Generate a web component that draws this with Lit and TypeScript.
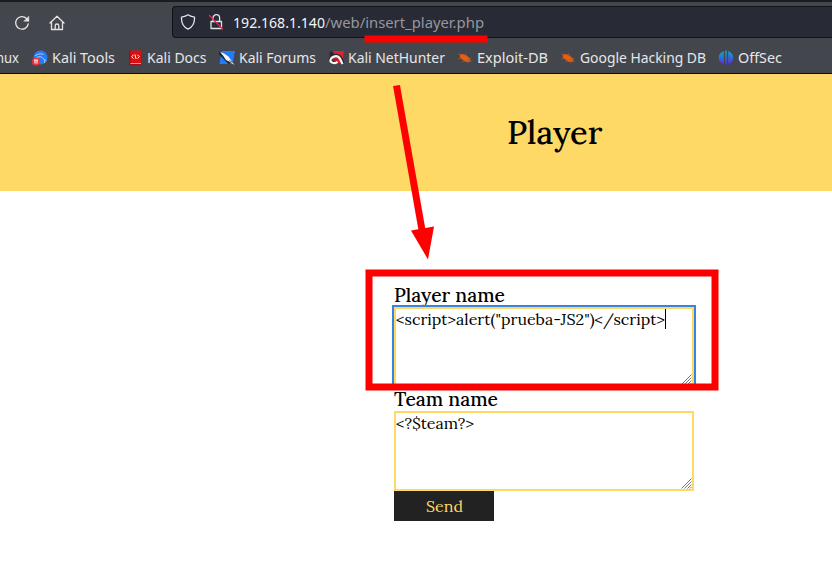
import { LitElement, html, css, svg } from "lit";
import { customElement } from "lit/decorators.js";

const bug = svg`<svg class="ico" viewBox="0 0 16 16"><path d="M2.500 4.500 5 4l3 .8 3 2 2 1.700.5 2.500-2 1.200-3-.4-3-2-2.500-2.300z" fill="#e95d0f"/><path d="M1 3.500l4 2M.8 8.500l5 .5M5 12.500l3-2M8 2.500l2 4M14.500 8l-4 1M15 11.500l-4-1M11 13.500l-1-3" stroke="#a3562c" stroke-width=".7" fill="none"/></svg>`;

const icons: Record<string, unknown> = {
  tools: svg`<svg class="ico" viewBox="0 0 16 16"><circle cx="8.500" cy="7.500" r="7" fill="#2879ef"/><path d="M3 6c3-2.500 6-2.500 8.500-1.500M4 8c3-2 6-1.500 7 .5 1 1.500 2.500 1 3.500 2.500M12 10c1 1 1 2 .5 3" stroke="#b4d2ff" stroke-width="1" fill="none"/><circle cx="4" cy="11.500" r="4" fill="#ee3038"/><path d="M2 10h4M3 10v3.600M5 10v3.600" stroke="#fff" stroke-width="1"/></svg>`,
  docs: svg`<svg class="ico" viewBox="0 0 16 16"><path d="M2 1 3.500.5H14V13H2z" fill="#dc1010"/><path d="M2 1v13.500h1.500V.5z" fill="#a10d18"/><path d="M3.500 13H14v.8H3.500z" fill="#c9c9c9"/><path d="M2 14h12v1.300H2z" fill="#a10d18"/><path d="M6.500 4.800 4.700 6.700l1.800 1.900M10.500 4.800 12.300 6.700l-1.800 1.900M7.900 4.500 9.100 9" stroke="#fff" stroke-width="1" fill="none"/></svg>`,
  forums: svg`<svg class="ico" viewBox="0 0 16 16"><path d="M2.500 1H16l-2.500 13H.5z" fill="#217df5"/><path d="M0 2.500 11 13.500" stroke="#24262d" stroke-width="3"/><path d="M1 2 5 3.500 9.500 6.500 12 10l3.500 5-4.500-3L7 10 4 5.500z" fill="#f5f5f5"/><path d="M10.500 10.500l3 2" stroke="#24262d" stroke-width=".8"/></svg>`,
  hunter: svg`<svg class="ico" viewBox="0 0 16 16"><path d="M3.500 1H16l-2 12H8z" fill="#e3212b"/><path d="M1.500 2.500 4.500 1l1.500 3-4 7z" fill="#292a2f"/><path d="M6 13C.5 12 1.500 5.500 8 5.500c4 0 5 3.500 7 8" stroke="#25262c" stroke-width="3.400" fill="none"/><path d="M9.500 11.800C6 14.500 1.800 12.500 2.500 9.800 3.200 6.800 8 5.200 10.500 7c2 1.500 2.500 4 4 7" stroke="#f6f6f6" stroke-width="2.200" fill="none"/><path d="M5.500 9.700 8.500 8.200l1.500 1.500-3 2z" fill="#bd1925"/></svg>`,
  bug,
  offsec: svg`<svg class="ico" viewBox="0 0 16 16"><defs><linearGradient id="g" gradientUnits="userSpaceOnUse" x1="0" y1="1" x2="0" y2="15"><stop stop-color="#0dabc2"/><stop offset=".5" stop-color="#316bd5"/><stop offset="1" stop-color="#6520df"/></linearGradient></defs><path d="M5.800 1v13.300C-1 12-1 3.300 5.800 1zM7.200.6h1.600v15H7.200zM10.200 1c6.800 2.300 6.800 11 0 13.300z" fill="url(#g)"/></svg>`,
};

const bookmarks = [
  { icon: "tools", text: "Kali Tools", x: 32, w: 63 },
  { icon: "docs", text: "Kali Docs", x: 127, w: 59.5 },
  { icon: "forums", text: "Kali Forums", x: 219, w: 77 },
  { icon: "hunter", text: "Kali NetHunter", x: 328, w: 97 },
  { icon: "bug", text: "Exploit-DB", x: 457, w: 71 },
  { icon: "bug", text: "Google Hacking DB", x: 560, w: 126 },
  { icon: "offsec", text: "OffSec", x: 718, w: 44 },
];

// Text run fitted to a fixed advance width; the baseline lies one font size below the top.
const fit = (text: string, width: number, size: number, kind = "") =>
  html`<svg class="fit ${kind}" width=${width} height=${size * 1.3} font-size=${size}>
    <text x="0" y=${size} textLength=${width} lengthAdjust="spacingAndGlyphs">${text}</text>
  </svg>`;

const grip = html`<svg class="grip" viewBox="0 0 11 11"><path d="M.5 10.500l10-10M3.500 10.500l7-7M6.500 10.500l4-4M9 10.500l1.500-1.500" stroke="#777" stroke-width="1"/></svg>`;

@customElement("app-root")
export class AppRoot extends LitElement {
  static styles = css`
    :host { display: block; position: relative; width: 832px; height: 576px; overflow: hidden; background: #fff; color: #000; font-family: Lora, "Liberation Serif", serif; }
    * { box-sizing: border-box; }
    svg { display: block; flex: none; }
    .fit { overflow: visible; fill: currentColor; }
    .heavy { font-weight: 500; }
    .chrome { height: 74px; background: #44464d; border-top: 2px solid #1b1c21; border-bottom: 1px solid #0c0c0d; color: #e6e6e8; font-family: "Noto Sans", sans-serif; }
    .nav { height: 41px; padding: 4px 0 0 14px; display: flex; }
    .tool { width: 16px; height: 16px; margin: 9px 19px 0 0; fill: none; stroke: #e4e4e6; stroke-width: 1.3; stroke-linejoin: round; stroke-linecap: round; }
    .url { width: 662px; margin-left: 88px; height: 32px; border: 1px solid #111218; border-right: 0; border-radius: 4px 0 0 4px; background: #282a35; display: flex; padding: 6px 0 0 7px; color: #f4f4f5; }
    .url .tool { margin: 1px 12px 0 0; }
    .url .tool.lock { margin-right: 9px; }
    .path { color: #96979e; }
    .marks { display: flex; height: 30px; padding-top: 5px; }
    .cut { width: 32px; margin-left: -4px; margin-right: 4px; }
    .mark { display: flex; gap: 4px; flex: none; }
    .ico { width: 16px; height: 16px; margin-top: 2px; }
    .banner { height: 117px; background: #ffd966; padding: 37px 0 0 507px; }
    .form { margin: 92px 0 0 394px; width: 300px; }
    .label { height: 24px; }
    .area { height: 80px; border: 2px solid #ffd966; position: relative; display: flex; background: #fff; }
    .area.focus { outline: 2px solid #3584e4; }
    .caret { width: 1px; height: 20px; background: #000; }
    .grip { position: absolute; right: 0; bottom: 0; width: 11px; height: 11px; }
    .send { display: flex; justify-content: center; align-items: flex-start; width: 100px; height: 30px; background: #222; color: #ffd966; padding: 5px 0 0; border: 0; font-family: inherit; }
    .marksover { position: absolute; left: 0; top: 0; pointer-events: none; }
  `;

  render() {
    return html`
      <header class="chrome">
        <nav class="nav">
          <svg class="tool" viewBox="0 0 16 16"><path d="M14.200 8.800A6.300 6.300 0 1 1 12.500 3.500L14.500 5.500"/><path d="M14.800 1.500v4.700h-4.700z" fill="#e4e4e6" stroke-width=".5"/></svg>
          <svg class="tool" viewBox="0 0 16 16"><path d="M1 8 8 1.300 15 8M2.500 7v7.500h11V7M6.200 14.500V10.500Q6.200 9 8 9t1.800 1.500v4"/></svg>
          <div class="url">
            <svg class="tool" viewBox="0 0 16 16"><path d="M8 .8c2 1.600 4.300 2 6.500 2.300C14.800 8.500 12.500 13 8 15.200 3.500 13 1.200 8.500 1.500 3.100 3.700 2.800 6 2.400 8 .8z"/></svg>
            <svg class="tool lock" viewBox="0 0 16 16"><path d="M5 7V4a3.300 3.300 0 0 1 6.600 0v3M3 7.500h10.500v7H3z"/><path d="M1.500 1.500l13 13.500" stroke="#e22850"/></svg>
            ${fit("192.168.1.140", 92, 14.9)}
            <span class="path">${fit("/web/insert_player.php", 159, 14.9)}</span>
          </div>
        </nav>
        <div class="marks">
          <div class="cut">${fit("nux", 23, 14.9)}</div>
          ${bookmarks.map((b, i) => {
            const next = bookmarks[i + 1];
            return html`<div class="mark" style="width:${(next ? next.x : 832) - b.x}px">
              ${icons[b.icon]}${fit(b.text, b.w, 14.9)}
            </div>`;
          })}
        </div>
      </header>
      <div class="banner">${fit("Player", 95.5, 33, "heavy")}</div>
      <form class="form">
        <div class="label">${fit("Player name", 111, 18.72, "heavy")}</div>
        <div class="area focus">${fit('<script>alert("prueba-JS2")</script>', 269, 16)}<span class="caret"></span>${grip}</div>
        <div class="label">${fit("Team name", 104, 18.72, "heavy")}</div>
        <div class="area">${fit("<?$team?>", 78, 16)}${grip}</div>
        <button class="send" type="button">${fit("Send", 37, 16)}</button>
      </form>
      <svg class="marksover" width="832" height="576" viewBox="0 0 832 576">
        <path d="M364.500 35.500H487.500V42.500H364.500z" fill="#f00"/>
        <path d="M396.500 85.500 422 230" stroke="#f00" stroke-width="7"/>
        <path d="M411 230.500 434 226.500 428 259.500z" fill="#f00"/>
        <rect x="369" y="273" width="346" height="114" fill="none" stroke="#f00" stroke-width="7"/>
      </svg>
    `;
  }
}
